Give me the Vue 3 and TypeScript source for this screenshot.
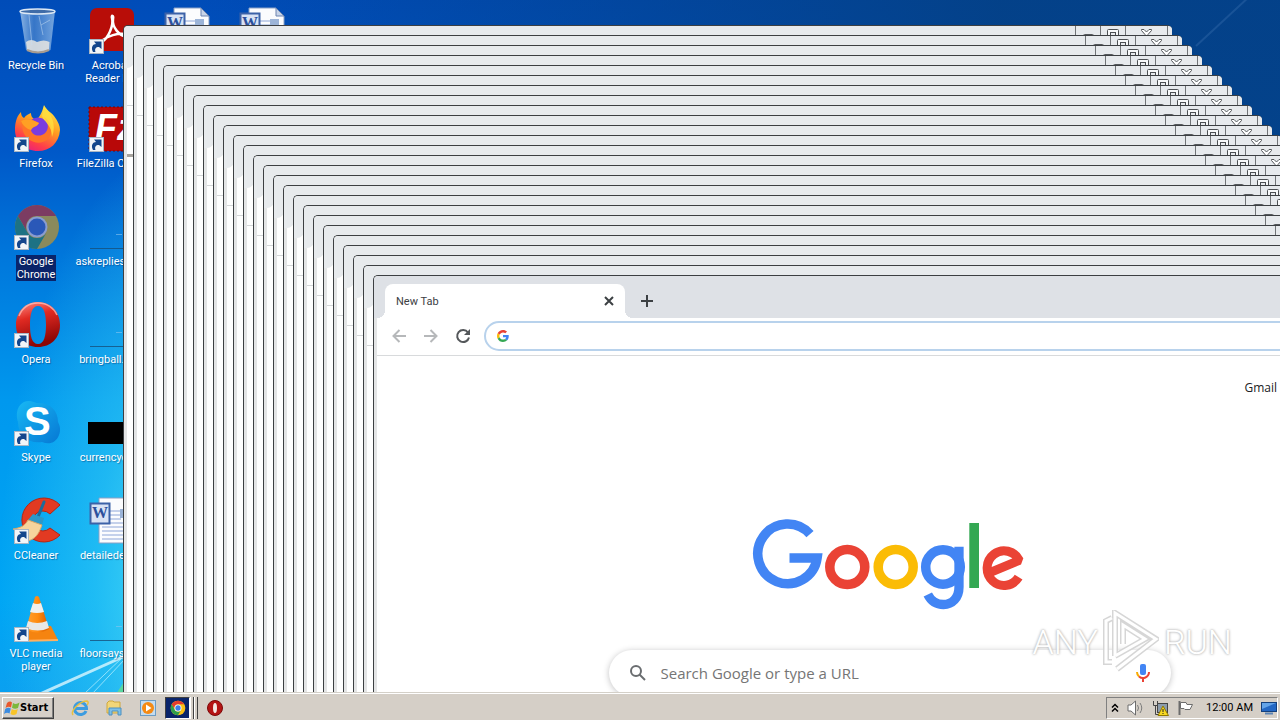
<script setup lang="ts">
interface Shortcut {
  label: string
  icon: string
  mark?: string
  link?: boolean
  selected?: boolean
}

const columns: Shortcut[][] = [
  [
    { label: 'Recycle Bin', icon: 'bin' },
    { label: 'Firefox', icon: 'firefox', link: true },
    { label: 'Google Chrome', icon: 'chrome', link: true, selected: true },
    { label: 'Opera', icon: 'opera', link: true },
    { label: 'Skype', icon: 'skype', mark: 'S', link: true },
    { label: 'CCleaner', icon: 'ccleaner', link: true },
    { label: 'VLC media player', icon: 'vlc', link: true },
  ],
  [
    { label: 'Acrobat Reader DC', icon: 'acrobat', link: true },
    { label: 'FileZilla Client', icon: 'filezilla', mark: 'Fz', link: true },
    { label: 'askreplies.png', icon: 'line' },
    { label: 'bringball.png', icon: 'line' },
    { label: 'currencyde...', icon: 'black' },
    { label: 'detailedec....', icon: 'word', mark: 'W' },
    { label: 'floorsays.jpg', icon: 'line' },
  ],
  [{ label: '', icon: 'word', mark: 'W' }],
  [{ label: '', icon: 'word', mark: 'W' }],
]

const step = 10
const origin = { x: 123, y: 25 }
const ghosts = Array.from({ length: 25 }, (_, i) => i)

const place = (i: number) => ({
  left: `${origin.x + i * step}px`,
  top: `${origin.y + i * step}px`,
})
</script>

<template>
  <div class="screen">
    <svg class="defs" aria-hidden="true">
      <defs>
        <linearGradient id="gFire" x1="0.8" y1="0" x2="0.3" y2="1">
          <stop offset="0" stop-color="#fff04a" />
          <stop offset="0.45" stop-color="#ff9a20" />
          <stop offset="0.8" stop-color="#ff3d4a" />
          <stop offset="1" stop-color="#e8207c" />
        </linearGradient>
        <linearGradient id="gOpera" x1="0" y1="0" x2="0.3" y2="1">
          <stop offset="0" stop-color="#ff9088" />
          <stop offset="0.4" stop-color="#e02a22" />
          <stop offset="1" stop-color="#8c0606" />
        </linearGradient>
        <linearGradient id="gSkype" x1="0" y1="0" x2="1" y2="1">
          <stop offset="0" stop-color="#18b8f4" />
          <stop offset="1" stop-color="#0678d4" />
        </linearGradient>
        <linearGradient id="gBin" x1="0" y1="0" x2="1" y2="0">
          <stop offset="0" stop-color="#b9d6f2" stop-opacity="0.75" />
          <stop offset="0.4" stop-color="#5a90d0" stop-opacity="0.6" />
          <stop offset="1" stop-color="#9cc2ea" stop-opacity="0.75" />
        </linearGradient>
        <linearGradient id="gCone" x1="0" y1="0" x2="1" y2="0">
          <stop offset="0" stop-color="#ffa030" />
          <stop offset="0.5" stop-color="#ff8c10" />
          <stop offset="1" stop-color="#d85c00" />
        </linearGradient>
      </defs>

      <symbol id="arrow" viewBox="0 0 15 15">
        <rect x="0.5" y="0.5" width="14" height="14" fill="#f2f5f8" stroke="#a9b6c4" />
        <path d="M4 13 C1.500 8 4 5 7 5 L5 2.500 L12.500 2.500 L12.500 10 L10 8 C6.500 8 5.500 10 6.500 13 Z" fill="#14468c" />
      </symbol>

      <symbol id="bin" viewBox="0 0 48 48">
        <path d="M7 4 L42 4 L37.500 43 Q25 49 13 43 Z" fill="url(#gBin)" />
        <path d="M13 35 Q18 31 24 35 Q31 32 36.500 35 L36 43 Q25 47 14 43 Z" fill="#e9e6e2" fill-opacity="0.85" />
        <path d="M14 43 Q25 48 36 43" fill="none" stroke="#a89c90" stroke-width="2" />
        <ellipse cx="24.500" cy="4.500" rx="17.500" ry="2.500" fill="#3f6ca8" stroke="#dce8f4" stroke-width="1.500" />
        <path d="M28 18 L37 13 M26 9 L30 28 M16 8 L19 38" stroke="#c8def4" stroke-opacity="0.5" fill="none" />
      </symbol>

      <symbol id="firefox" viewBox="0 0 48 48">
        <path d="M31 0 C34 6 37 6 41 11 C45 16 47 21 47 25 C46 38 37 46 25 46 C12 46 2 37 2 25 C2 19 3 12 8 7 C8 10 9 12 11 13 C13 10 16 9 18 8 C18 11 19 13 23 15 C26 13 29 8 31 0 Z" fill="url(#gFire)" />
        <circle cx="25" cy="23" r="10.500" fill="#7a3ce0" />
        <path d="M8 16 C15 12 21 16 26 18 C24 22 20 21 18 25 C19 31 28 33 33 27 C37 22 34 15 30 12 C39 15 41 28 35 34 C26 42 13 36 10 26 Z" fill="#ff7428" />
        <path d="M8 16 C15 12 21 16 26 18 C24 22 20 21 18 25 C14 24 10 21 8 16 Z" fill="#ffa024" />
        <path d="M31 1 C38 9 44 19 39 32 C39 20 31 17 29 11 Z" fill="#ffe040" fill-opacity="0.8" />
      </symbol>

      <symbol id="chrome" viewBox="0 0 48 48">
        <circle cx="24" cy="24" r="22" fill="#fbc116" />
        <path d="M4.950 13 A22 22 0 0 1 43.050 13 L24 13 A11 11 0 0 0 14.470 29.500 Z" fill="#e33b2e" />
        <path d="M4.950 13 A22 22 0 0 0 24 46 L33.530 29.500 A11 11 0 0 1 14.470 29.500 Z" fill="#2f9e4c" />
        <circle cx="24" cy="24" r="10.500" fill="#fff" />
        <circle cx="24" cy="24" r="8" fill="#3f7de8" />
      </symbol>

      <symbol id="chrome-dim" viewBox="0 0 48 48">
        <circle cx="24" cy="24" r="22" fill="#8b8a5c" />
        <path d="M4.950 13 A22 22 0 0 1 43.050 13 L24 13 A11 11 0 0 0 14.470 29.500 Z" fill="#7c3c62" />
        <path d="M4.950 13 A22 22 0 0 0 24 46 L33.530 29.500 A11 11 0 0 1 14.470 29.500 Z" fill="#1d7284" />
        <circle cx="24" cy="24" r="10.500" fill="#8a9cd0" />
        <circle cx="24" cy="24" r="8.500" fill="#2a58b8" />
      </symbol>

      <symbol id="opera" viewBox="0 0 48 48">
        <path fill-rule="evenodd" d="M25 1 C38 1 47 11 47 24 C47 37 38 46 25 46 C12 46 3 37 3 24 C3 11 12 1 25 1 Z M25 5 C19 5 17 13 17 24 C17 35 19 43 25 43 C31 43 33 35 33 24 C33 13 31 5 25 5 Z" fill="url(#gOpera)" />
        <path d="M6 15 C10 5 18 2 25 2 C34 2 41 7 44 14" fill="none" stroke="#ffc8c0" stroke-opacity="0.7" stroke-width="1.500" />
      </symbol>

      <symbol id="skype" viewBox="0 0 48 48">
        <path d="M15 2 C20 2 22 4 25 4 C38 4 45 12 45 23 C47 27 48 31 46 36 C43 44 36 46 29 43 C15 45 5 36 5 23 C2 14 5 3 15 2 Z" fill="url(#gSkype)" />
      </symbol>

      <symbol id="ccleaner" viewBox="0 0 48 48">
        <path d="M47 8 A22 22 0 1 0 47 38 L37 31 A10 10 0 1 1 37 17 Z" fill="#e23a22" stroke="#b82410" />
        <path d="M31 5 L25 20" stroke="#1c6c9c" stroke-width="3" stroke-linecap="round" />
        <path d="M15 23 L20 17 L31 21 L29 28 Z" fill="#2c98c8" />
        <path d="M15 23 L29 28 C26 37 22 42 15 44 L0 32 C7 31 12 29 15 23 Z" fill="#f6d49c" stroke="#d8a868" />
      </symbol>

      <symbol id="vlc" viewBox="0 0 48 48">
        <path d="M11 32 L38 31 L45 45 L6 46 Z" fill="#f58410" />
        <path d="M6 45 L45 44 L45 46 L6 47 Z" fill="#ffb060" />
        <path d="M22 2 Q24 0 26 2 L36 34 Q25 41 13 34 Z" fill="url(#gCone)" />
        <path d="M20 8 Q24 10 28 8 L31 17 Q24 19 17 17 Z" fill="#f0f0ee" />
        <path d="M15 26 Q24 30 34 26 L36 33 Q25 38 13 33 Z" fill="#e8e8e6" />
      </symbol>

      <symbol id="acrobat" viewBox="0 0 48 48">
        <rect x="2" y="1" width="44" height="43" rx="7" fill="#b80d08" />
        <path d="M14 35 C20 31 26 19 24 11 C23 8 26 8 25 12 C24 20 31 29 39 30 C44 31 42 27 37 27 C29 26 20 29 15 33 C12 36 12 38 14 35 Z" fill="none" stroke="#fff" stroke-width="2.500" />
      </symbol>

      <symbol id="filezilla" viewBox="0 0 48 48">
        <rect x="1" y="2" width="45" height="44" fill="#b80808" stroke="#780404" stroke-dasharray="2 2" />
      </symbol>

      <symbol id="line" viewBox="0 0 48 48">
        <rect x="2" y="45" width="46" height="1" fill="#17507c" fill-opacity="0.8" />
        <rect x="28" y="31" width="6" height="1" fill="#8cc4ee" fill-opacity="0.6" />
      </symbol>

      <symbol id="black" viewBox="0 0 48 48">
        <rect x="0" y="23" width="48" height="22" fill="#000" />
      </symbol>

      <symbol id="word" viewBox="0 0 48 48">
        <path d="M11 1 H38 L46 9 V46 H11 Z" fill="#fbfcfe" stroke="#8aa0c4" />
        <path d="M38 1 L46 9 H38 Z" fill="#c8d4e8" stroke="#6c84b0" />
        <path d="M14 14 H33 M14 18 H33 M14 22 H33 M14 26 H43 M14 30 H43 M14 34 H43 M14 38 H43 M14 42 H43" stroke="#8ea6d8" />
        <rect x="32" y="12" width="9" height="9" fill="#9cb4d8" />
        <rect x="2.500" y="6.500" width="19" height="20" fill="#d8e2f4" stroke="#3c62a8" stroke-width="2" />
      </symbol>

      <symbol id="gmark" viewBox="0 0 48 48">
        <path fill="#ea4335" d="M24 9.500c3.540 0 6.710 1.220 9.210 3.600l6.850-6.850C35.900 2.380 30.470 0 24 0 14.620 0 6.510 5.380 2.560 13.220l7.980 6.190C12.430 13.720 17.740 9.500 24 9.500z" />
        <path fill="#4285f4" d="M46.980 24.550c0-1.570-.15-3.090-.38-4.550H24v9.020h12.940c-.58 2.960-2.260 5.480-4.780 7.180l7.730 6c4.510-4.180 7.090-10.360 7.090-17.650z" />
        <path fill="#fbbc05" d="M10.530 28.590c-.48-1.450-.76-2.990-.76-4.590s.27-3.140.76-4.590l-7.980-6.190C.92 16.460 0 20.120 0 24c0 3.880.92 7.540 2.560 10.780l7.970-6.190z" />
        <path fill="#34a853" d="M24 48c6.480 0 11.930-2.130 15.890-5.810l-7.730-6c-2.150 1.450-4.920 2.300-8.160 2.300-6.260 0-11.570-4.220-13.470-9.910l-7.980 6.190C6.510 42.620 14.620 48 24 48z" />
      </symbol>
    </svg>

    <main class="desktop">
      <svg class="wallpaper" viewBox="0 0 1280 692" preserveAspectRatio="none" aria-hidden="true">
        <path d="M40 694 Q80 676 125 656" stroke="#e8fbff" stroke-opacity="0.75" stroke-width="3" fill="none" />
        <path d="M84 694 L124 656 M92 694 L126 658" stroke="#c0f2ff" stroke-opacity="0.7" fill="none" />
        <path d="M116 694 L124 682 V694 Z" fill="#58d8a0" />
        <path d="M1196 46 L1250 -4" stroke="#6c9cd0" stroke-opacity="0.2" stroke-width="2" />
      </svg>

      <div class="shortcuts">
        <div v-for="(column, c) in columns" :key="c" class="column">
          <button v-for="item in column" :key="item.icon + item.label" class="shortcut" :class="{ selected: item.selected }">
            <span class="picture">
              <svg class="glyph" aria-hidden="true"><use :href="'#' + item.icon + (item.selected ? '-dim' : '')" /></svg>
              <span v-if="item.mark" class="mark" :class="item.icon + '-mark'">{{ item.mark }}</span>
              <svg v-if="item.link" class="link-arrow" aria-hidden="true"><use href="#arrow" /></svg>
            </span>
            <span v-if="item.label" class="label">{{ item.label }}</span>
          </button>
        </div>
      </div>

      <section v-for="i in ghosts" :key="i" class="window ghost" :style="place(i)" aria-hidden="true">
        <div class="ghost-strip">
          <button class="caption" tabindex="-1">
            <svg width="11" height="5"><rect x="0.500" y="0.500" width="10" height="4" rx="1" fill="#fff" stroke="#55585b" /></svg>
          </button>
          <button class="caption top" tabindex="-1">
            <svg width="12" height="10">
              <rect x="0.500" y="0.500" width="11" height="9" rx="1" fill="#f8f9fa" stroke="#4c4f52" />
              <rect x="3.500" y="3.500" width="5" height="3" fill="#e7eaed" stroke="#4c4f52" />
            </svg>
          </button>
          <button class="caption close top" tabindex="-1">
            <svg width="13" height="12">
              <path d="M1.500 0.500 H4 L6.500 3 L9 0.500 H11.500 V1.500 L8 5.500 L11.500 9.500 V11 H9 L6.500 8 L4 11 H1.500 V9.500 L5 5.500 L1.500 1.500 Z" fill="#fff" stroke="#55585b" />
            </svg>
          </button>
        </div>
        <svg class="foot" width="8" height="10"><path d="M0 10 V8 Q6 8 8 0 V10 Z" fill="#fff" /></svg>
        <div class="ghost-bar"></div>
        <div v-if="i === 0" class="ghost-mark"></div>
      </section>

      <section class="window browser" :style="place(ghosts.length)">
        <header class="tabs">
          <div class="tab">
            <span>New Tab</span>
            <button class="tab-close" aria-label="Close tab">
              <svg width="10" height="10"><path d="M1 1 L9 9 M9 1 L1 9" stroke="#3c4043" stroke-width="2" /></svg>
            </button>
          </div>
          <button class="tab-add" aria-label="New tab">
            <svg width="12" height="12"><path d="M6 0 V12 M0 6 H12" stroke="#3c4043" stroke-width="2" /></svg>
          </button>
        </header>
        <nav class="toolbar">
          <button aria-label="Back">
            <svg width="14" height="14"><path d="M14 7 H1.500 M7.500 1 L1.500 7 L7.500 13" fill="none" stroke="#b6b8ba" stroke-width="2" /></svg>
          </button>
          <button aria-label="Forward">
            <svg width="14" height="14"><path d="M0 7 H12.500 M6.500 1 L12.500 7 L6.500 13" fill="none" stroke="#b6b8ba" stroke-width="2" /></svg>
          </button>
          <button aria-label="Reload">
            <svg width="16" height="16">
              <path d="M13 4.500 A6 6 0 1 0 14 9.500" fill="none" stroke="#54575a" stroke-width="2" />
              <path d="M15 1 V7 H9 Z" fill="#54575a" />
            </svg>
          </button>
          <label class="omnibox">
            <svg width="12" height="12" aria-hidden="true"><use href="#gmark" /></svg>
            <input type="text" aria-label="Address" />
          </label>
        </nav>
        <div class="page">
          <div class="page-top"><a href="#">Gmail</a></div>
          <svg class="logo" viewBox="753 519 273 92" width="273" height="92" role="img" aria-label="Google">
            <g fill="none">
              <path d="M809.500 532.700 A29.800 29.800 0 1 0 816.600 556.500 H789" stroke="#4285f4" stroke-width="9.500" transform="translate(0.500 1.500)" />
              <circle cx="847.300" cy="567" r="17.500" stroke="#ea4335" stroke-width="9.500" />
              <circle cx="895.700" cy="567" r="17.500" stroke="#fbbc05" stroke-width="9.500" />
              <circle cx="943" cy="567" r="17.300" stroke="#4285f4" stroke-width="9.500" />
              <path d="M959 546.700 V587 C959 598 952 604.500 943.500 604.500 C936 604.500 931 601 927.800 594.500" stroke="#4285f4" stroke-width="9.300" />
              <rect x="969.300" y="523" width="9.700" height="65" fill="#34a853" />
              <path d="M991 572.200 L1019.300 560.300 A17 17.300 0 1 0 1018.600 577.200" stroke="#ea4335" stroke-width="9" stroke-linejoin="bevel" />
            </g>
          </svg>
          <label class="search">
            <svg width="18" height="18" aria-hidden="true">
              <circle cx="7" cy="7" r="5" fill="none" stroke="#6a6d70" stroke-width="2" />
              <path d="M10.500 10.500 L16 16" stroke="#6a6d70" stroke-width="2" />
            </svg>
            <input type="text" placeholder="Search Google or type a URL" aria-label="Search" />
            <svg width="14" height="20" aria-hidden="true">
              <rect x="4" y="1" width="6" height="11" rx="2" fill="#4285f4" />
              <path d="M1 9 A6 6 0 0 0 3 13.500" fill="none" stroke="#f9ab00" stroke-width="2" />
              <path d="M3 13.500 A6 6 0 0 0 13 9" fill="none" stroke="#ea4335" stroke-width="2" />
              <path d="M7 15 V19" stroke="#ea4335" stroke-width="2" />
            </svg>
          </label>
        </div>
      </section>

      <div class="watermark">
        <span>ANY</span>
        <svg width="56" height="64" viewBox="0 0 56 64" aria-hidden="true">
          <path d="M9 52 H3 V11 L9 8 M12 46 V3 L53 29 L14 59 M12 46 L42 29 L20 15 V34" fill="none" stroke="#d2d2d2" stroke-width="6" />
          <path d="M9 52 H3 V11 L9 8 M12 46 V3 L53 29 L14 59 M12 46 L42 29 L20 15 V34" fill="none" stroke="#fff" stroke-width="3" />
        </svg>
        <span>RUN</span>
      </div>
    </main>

    <footer class="taskbar">
      <button class="start">
        <svg width="16" height="16" aria-hidden="true">
          <path d="M3 3 Q6 0.500 8 2.500 L7 7.500 Q4.500 6 1.500 8 Z" fill="#e8582c" />
          <path d="M9 3 Q12 5 15.500 2.500 L14 8 Q11 9.500 8 7.800 Z" fill="#7cb83c" />
          <path d="M1.200 9 Q4 7 6.800 8.500 L5.500 13.500 Q3 12 0 14 Z" fill="#3c8ce0" />
          <path d="M7.800 9 Q10.500 11 13.800 9 L12.500 14 Q9.500 16 6.500 14 Z" fill="#f8c428" />
        </svg>
        <span>Start</span>
      </button>
      <div class="pinned">
        <button aria-label="Internet Explorer">
          <svg width="18" height="18">
            <path d="M15 12 A6 6 0 1 1 15.500 9.500 H5" fill="none" stroke="#3c9ce0" stroke-width="3" />
            <path d="M2 16 C-1 12 9 2 16 2 C18 3 17 5 16 6" fill="none" stroke="#e8c040" stroke-width="1.500" />
          </svg>
        </button>
        <button aria-label="File Explorer">
          <svg width="18" height="18">
            <path d="M2 4 L4 2 H8 L9 3 H15 V14 H2 Z" fill="#f2d678" stroke="#cfa83c" />
            <path d="M4 9 H16 V16 H13 V12 H7 V16 H4 Z" fill="#7cc0e8" stroke="#4c90c0" />
          </svg>
        </button>
        <button aria-label="Media Player">
          <svg width="18" height="18">
            <rect x="1.500" y="1.500" width="15" height="15" fill="#c4dcf0" stroke="#6c9cc4" />
            <circle cx="9" cy="9" r="6" fill="#f58a14" />
            <path d="M7 5.500 L12.500 9 L7 12.500 Z" fill="#fff" />
          </svg>
        </button>
        <button class="active" aria-label="Chrome">
          <svg width="16" height="16"><use href="#chrome" /></svg>
        </button>
        <span class="stack"></span>
        <span class="stack"></span>
        <button aria-label="Opera">
          <svg width="18" height="18">
            <circle cx="9" cy="9" r="7.500" fill="#b41414" stroke="#7c0808" />
            <ellipse cx="9" cy="9" rx="2" ry="5" fill="#f4e8e4" />
          </svg>
        </button>
      </div>
      <div class="tray">
        <svg width="8" height="10"><path d="M1 4.500 L4 1.500 L7 4.500 M1 8.500 L4 5.500 L7 8.500" fill="none" stroke="#000" stroke-width="1.500" /></svg>
        <svg width="17" height="16">
          <path d="M1 5 H4 L8.500 1 V15 L4 11 H1 Z" fill="#fff" stroke="#6c6c6c" />
          <path d="M10.500 5 Q12.500 8 10.500 11 M13 3 Q16.500 8 13 13" fill="none" stroke="#7c7c7c" />
        </svg>
        <svg width="17" height="16">
          <rect x="5.500" y="3.500" width="10" height="9" fill="#8c9cac" stroke="#444" />
          <path d="M1.500 1 V5.500 H5.500 V1 M3.500 5 V14.500 H7" fill="none" stroke="#444" />
          <path d="M11 6 L16.500 15.500 H6 Z" fill="#f8d820" stroke="#907800" />
          <path d="M11 9 V12 M11 13 V14" stroke="#222" />
        </svg>
        <svg width="17" height="16">
          <path d="M2.500 1 V15" stroke="#6c6c6c" stroke-width="2" />
          <path d="M3.500 2.500 H9 L10 4.500 H15.500 L13 9.500 H8 L7 8.500 H3.500 Z" fill="#fff" stroke="#6c6c6c" />
        </svg>
        <time>12:00 AM</time>
        <svg width="16" height="14">
          <rect x="0.500" y="1.500" width="15" height="9" fill="#2468c4" stroke="#14407c" />
          <path d="M1 2 H15 L1 8 Z" fill="#64a4e8" />
          <path d="M4 12.500 H12" stroke="#5c84b4" stroke-width="2" />
        </svg>
      </div>
    </footer>
  </div>
</template>

<style>
body {
  overflow: hidden;
}
</style>

<style scoped>
.screen {
  display: flex;
  flex-direction: column;
  height: 100vh;
  font: 11px/13px Roboto, 'Noto Sans', sans-serif;
  color: #000;
}

button {
  padding: 0;
  border: 0;
  background: none;
  font: inherit;
  color: inherit;
}

input {
  border: 0;
  outline: 0;
  padding: 0;
  background: none;
  font: inherit;
  min-width: 0;
}

svg {
  display: block;
  flex: none;
}

.defs {
  position: absolute;
  width: 0;
  height: 0;
}

.desktop {
  position: relative;
  flex: 1;
  min-height: 0;
  overflow: hidden;
  background:
    radial-gradient(ellipse 190px 440px at 190px 580px, rgba(110, 240, 245, 0.75), rgba(60, 210, 245, 0.5) 50%, transparent),
    linear-gradient(90deg, transparent 200px, rgba(4, 64, 132, 0.9) 1000px),
    linear-gradient(180deg, #004cb8 0, #0058c8 150px, #0078dc 260px, #0098ee 400px, #00a6f4 600px, #0aa0f0 692px);
}

.wallpaper {
  position: absolute;
  inset: 0;
  width: 100%;
  height: 100%;
}

.shortcuts {
  position: relative;
  display: flex;
  gap: 3px;
  padding-top: 7px;
}

.column {
  display: flex;
  flex-direction: column;
  width: 72px;
}

.shortcut {
  display: flex;
  flex-direction: column;
  align-items: center;
  gap: 4px;
  height: 98px;
  color: #fff;
  text-shadow: 1px 1px 1px rgba(0, 30, 80, 0.4);
}

.picture {
  position: relative;
  width: 48px;
  height: 48px;
  margin-left: 2px;
}

.glyph {
  width: 48px;
  height: 48px;
}

.link-arrow {
  position: absolute;
  left: 1px;
  bottom: 1px;
  width: 15px;
  height: 15px;
}

.mark {
  position: absolute;
  font-family: 'Liberation Sans', sans-serif;
  font-weight: 700;
  text-shadow: none;
}

.skype-mark {
  left: 11px;
  top: 1px;
  font-size: 40px;
  line-height: 42px;
}

.filezilla-mark {
  left: 7px;
  top: 2px;
  font-size: 36px;
  font-style: italic;
  line-height: 42px;
}

.word-mark {
  left: 4px;
  top: 7px;
  font-family: 'Liberation Serif', serif;
  font-size: 16px;
  line-height: 18px;
  color: #2c509c;
}

.label {
  max-width: 72px;
}

.selected .label {
  width: 40px;
  background: #0a246a;
}

.window {
  position: absolute;
  bottom: -40px;
  width: calc(100% - 231px);
  box-sizing: border-box;
  border: solid #3c3f42;
  border-width: 1px 0 0 1px;
  border-radius: 5px 5px 0 0;
  background: linear-gradient(90deg, #e4e5e6 3px, #fff 3px);
}

.ghost-strip {
  display: flex;
  justify-content: flex-end;
  height: 42px;
  padding-right: 4px;
  border-radius: 4px 4px 0 0;
  background: #e7eaed;
}

.caption {
  display: flex;
  justify-content: center;
  width: 25px;
  height: 18px;
  padding-top: 8px;
  box-sizing: border-box;
  border-left: 1px solid #707376;
}

.caption.top {
  padding-top: 3px;
}

.caption.close {
  width: 43px;
  border-right: 1px solid #707376;
}

.foot {
  position: absolute;
  left: 3px;
  top: 34px;
}

.ghost-bar {
  height: 37px;
  margin-left: 3px;
  border-bottom: 1px solid #d4d6d8;
}

.ghost-mark {
  width: 6px;
  height: 3px;
  margin: 48px 0 0 3px;
  background: #a8a39e;
}

.browser {
  display: flex;
  flex-direction: column;
}

.tabs {
  display: flex;
  align-items: flex-end;
  height: 42px;
  padding-left: 11px;
  border-radius: 4px 4px 0 0;
  background: #dee1e6;
}

.tab {
  position: relative;
  display: flex;
  align-items: center;
  justify-content: space-between;
  width: 240px;
  height: 34px;
  padding: 0 11px;
  box-sizing: border-box;
  border-radius: 8px 8px 0 0;
  background: #fff;
  color: #3c4043;
}

.tab::before,
.tab::after {
  content: '';
  position: absolute;
  bottom: 0;
  width: 8px;
  height: 8px;
}

.tab::before {
  right: 100%;
  background: radial-gradient(circle at 0 0, transparent 8px, #fff 8px);
}

.tab::after {
  left: 100%;
  background: radial-gradient(circle at 100% 0, transparent 8px, #fff 8px);
}

.tab-add {
  margin: 0 0 11px 16px;
}

.toolbar {
  display: flex;
  align-items: center;
  height: 35px;
  padding: 0 8px 2px 9px;
  margin-left: 3px;
  border-bottom: 1px solid #d8dadc;
}

.toolbar button {
  display: grid;
  place-items: center;
  width: 26px;
  height: 28px;
  margin-right: 6px;
}

.omnibox {
  display: flex;
  flex: 1;
  align-items: center;
  gap: 8px;
  height: 30px;
  margin-left: 2px;
  padding-left: 11px;
  box-sizing: border-box;
  border: 2px solid #b8d2ec;
  border-radius: 15px;
}

.omnibox input {
  flex: 1;
}

.page {
  display: flex;
  flex-direction: column;
  align-items: center;
  padding: 23px 17px 0 0;
}

.page-top {
  align-self: stretch;
  display: flex;
  justify-content: flex-end;
  padding-right: 128px;
  font: 12px/18px 'Open Sans', 'Noto Sans', sans-serif;
}

.page-top a {
  color: #202124;
  text-decoration: none;
}

.logo {
  margin-top: 122px;
  overflow: visible;
}

.search {
  display: flex;
  align-items: center;
  gap: 14px;
  width: 562px;
  height: 46px;
  margin-top: 39px;
  padding: 0 21px 0 20px;
  box-sizing: border-box;
  border-radius: 23px;
  box-shadow: 0 1px 6px rgba(32, 33, 36, 0.28);
}

.search input {
  flex: 1;
  font: 15px/22px 'Open Sans', 'Noto Sans', sans-serif;
}

.search input::placeholder {
  color: #757575;
  opacity: 1;
}

.watermark {
  position: absolute;
  right: 48px;
  bottom: 18px;
  display: flex;
  align-items: center;
  gap: 5px;
  color: #fff;
  font: 300 34px/44px Roboto, sans-serif;
  text-shadow: 0 0 3px #b0b0b0, 0 0 2px #b8b8b8;
  opacity: 0.9;
}

.taskbar {
  display: flex;
  align-items: center;
  height: 28px;
  padding: 2px 2px 0;
  box-sizing: border-box;
  border-top: 1px solid #d4d0c8;
  box-shadow: inset 0 1px #fff;
  background: #d5cfc7;
}

.start {
  display: flex;
  align-items: center;
  width: 52px;
  height: 22px;
  padding-left: 1px;
  box-sizing: border-box;
  border: 1px solid;
  border-color: #fff #404040 #404040 #fff;
  box-shadow: inset -1px -1px #808080;
  font: 700 11px/13px 'DejaVu Sans Condensed', sans-serif;
}

.pinned {
  display: flex;
  align-items: center;
  height: 22px;
  margin-left: 9px;
}

.pinned button {
  display: grid;
  place-items: center;
  width: 34px;
  height: 22px;
}

.pinned .active {
  width: 25px;
  box-sizing: border-box;
  border: 1px solid;
  border-color: #404040 #fff #fff #404040;
  background: #0a246a;
}

.stack {
  width: 4px;
  height: 22px;
  box-sizing: border-box;
  border-right: 1px solid #404040;
  border-left: 1px solid #fff;
}

.tray {
  display: flex;
  align-items: center;
  gap: 8px;
  height: 22px;
  margin-left: auto;
  padding: 0 0 0 4px;
  box-sizing: border-box;
  border: 1px solid;
  border-color: #808080 #fff #fff #808080;
}

.tray time {
  margin-left: 4px;
}
</style>
